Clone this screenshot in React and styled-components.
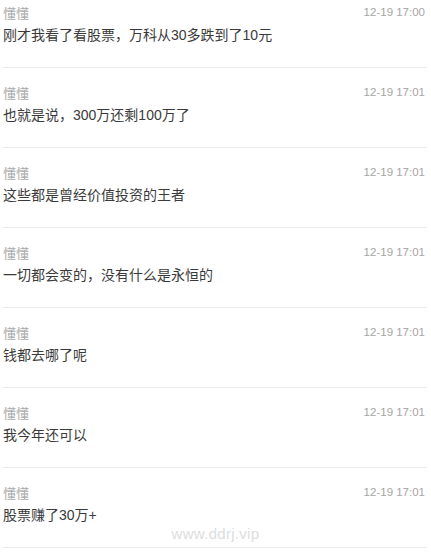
import React from 'react';
import styled, { createGlobalStyle } from 'styled-components';

const GlobalStyle = createGlobalStyle`
  body {
    margin: 0;
    background: #fff;
    font-family: "Liberation Sans", "Noto Sans CJK SC", sans-serif;
  }
`;

const Page = styled.div`
  position: relative;
  width: 431px;
  height: 556px;
  overflow: hidden;
  padding: 0 4px 0 3px;
  box-sizing: border-box;
`;

const Item = styled.div`
  border-bottom: 1px solid #ececec;
  padding-bottom: 20px;
  margin-bottom: 12px;
`;

const Head = styled.div`
  display: flex;
  justify-content: space-between;
  align-items: center;
  height: 24px;
`;

const Name = styled.span`
  font-size: 13px;
  color: #aaa;
`;

const Time = styled.span`
  font-size: 11.5px;
  color: #a6a6a6;
  margin-right: 2px;
`;

const Content = styled.div`
  font-size: 14px;
  line-height: 23px;
  color: #3a3a3a;
`;

const Watermark = styled.div`
  position: absolute;
  left: 0;
  right: 0;
  top: 525px;
  text-align: center;
  font-size: 15px;
  color: #ddd;
  letter-spacing: 0.3px;
`;

const messages = [
  { time: '12-19 17:00', text: '刚才我看了看股票，万科从30多跌到了10元' },
  { time: '12-19 17:01', text: '也就是说，300万还剩100万了' },
  { time: '12-19 17:01', text: '这些都是曾经价值投资的王者' },
  { time: '12-19 17:01', text: '一切都会变的，没有什么是永恒的' },
  { time: '12-19 17:01', text: '钱都去哪了呢' },
  { time: '12-19 17:01', text: '我今年还可以' },
  { time: '12-19 17:01', text: '股票赚了30万+' },
];

export default function App() {
  return (
    <>
      <GlobalStyle />
      <Page>
        {messages.map((m, i) => (
          <Item key={i}>
            <Head>
              <Name>懂懂</Name>
              <Time>{m.time}</Time>
            </Head>
            <Content>{m.text}</Content>
          </Item>
        ))}
        <Watermark>www.ddrj.vip</Watermark>
      </Page>
    </>
  );
}
